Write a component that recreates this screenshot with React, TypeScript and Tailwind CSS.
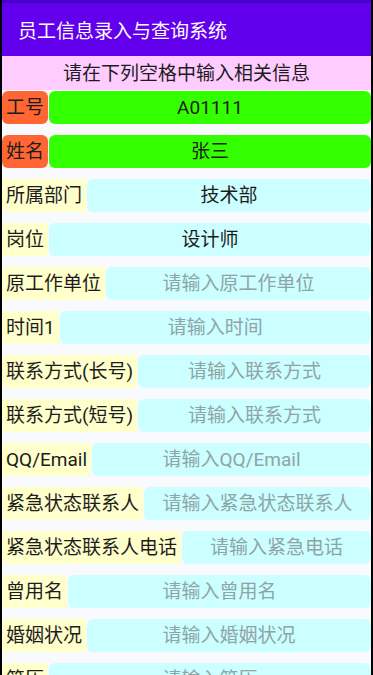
const rows: { label: string; value?: string; hint?: string; accent?: boolean }[] = [
  { label: "工号", value: "A01111", accent: true },
  { label: "姓名", value: "张三", accent: true },
  { label: "所属部门", value: "技术部" },
  { label: "岗位", value: "设计师" },
  { label: "原工作单位", hint: "请输入原工作单位" },
  { label: "时间1", hint: "请输入时间" },
  { label: "联系方式(长号)", hint: "请输入联系方式" },
  { label: "联系方式(短号)", hint: "请输入联系方式" },
  { label: "QQ/Email", hint: "请输入QQ/Email" },
  { label: "紧急状态联系人", hint: "请输入紧急状态联系人" },
  { label: "紧急状态联系人电话", hint: "请输入紧急电话" },
  { label: "曾用名", hint: "请输入曾用名" },
  { label: "婚姻状况", hint: "请输入婚姻状况" },
  { label: "简历", hint: "请输入简历" },
]

export default function App() {
  return (
    <div
      className="h-[675px] w-[373px] overflow-hidden border-x-2 border-black bg-[#f8fafd] text-[19px] leading-none text-[#1c1c1c]"
      style={{ fontFamily: "Roboto, 'Noto Sans CJK SC', sans-serif" }}
    >
      <div className="h-[3px] bg-[#4600c8]" />
      <header className="flex h-[53px] items-center bg-[#6200ee] px-4 pt-1 text-white">
        员工信息录入与查询系统
      </header>
      <div className="flex h-[34px] items-center justify-center bg-[#ffccff]">
        请在下列空格中输入相关信息
      </div>
      <main className="flex flex-col gap-[11px] pt-[1px]">
        {rows.map((r, i) => (
          <div key={i} className="flex h-[33px]">
            <div
              className={`flex items-center px-1 ${
                r.accent ? "rounded-md bg-[#ff6633]" : "bg-[#ffffcc]"
              }`}
            >
              {r.label}
            </div>
            <div
              className={`ml-[1px] flex flex-1 items-center justify-center rounded-md ${
                r.accent ? "bg-[#33ff00]" : "bg-[#ccffff]"
              }`}
            >
              {r.value ? (
                <span>{r.value}</span>
              ) : (
                <span className="text-[#8ea4a6]">{r.hint}</span>
              )}
            </div>
          </div>
        ))}
      </main>
    </div>
  )
}
